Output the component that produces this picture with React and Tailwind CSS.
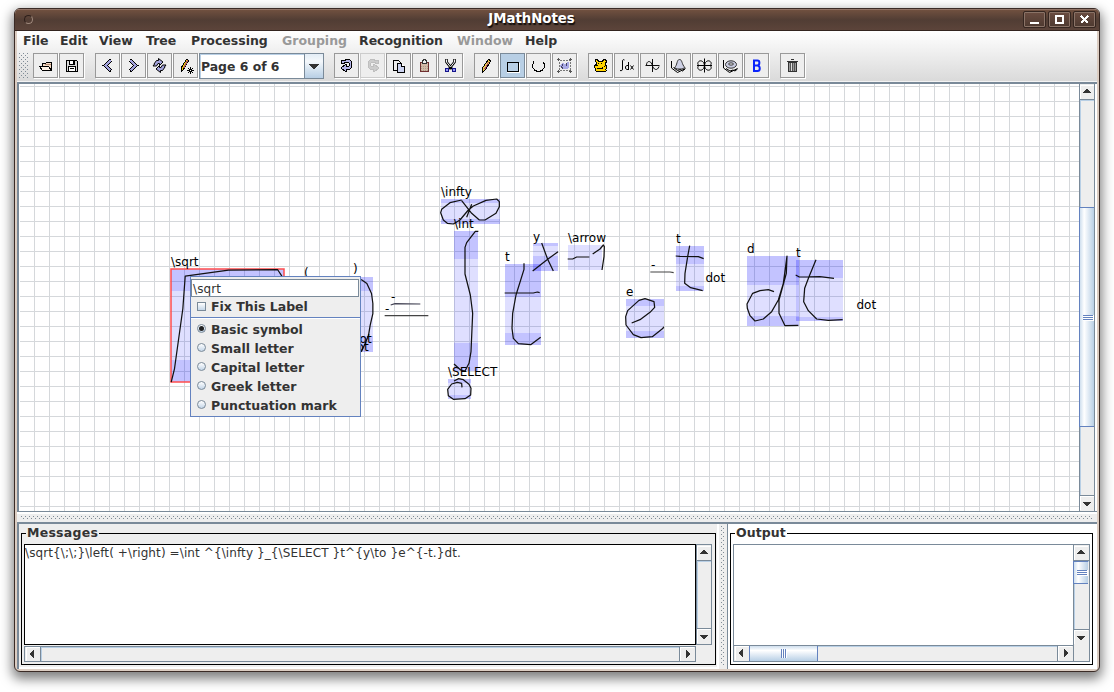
import React from 'react';

const MENUS = [
  ['File', 'w-[37px]'],
  ['Edit', 'w-[39px]'],
  ['View', 'w-[47px]'],
  ['Tree', 'w-[45px]'],
  ['Processing', 'w-[91px]'],
  ['Grouping', 'w-[77px] text-[#999999]'],
  ['Recognition', 'w-[98px]'],
  ['Window', 'w-[68px] text-[#999999]'],
  ['Help', 'w-[60px]'],
];

const CURL = 'M7.500 7.500h3l2-1h3l2 2v6l-2 2h-3v2h-1l-4.500-3.500 4.500-3.500h1v2h2l1-1v-2l-1-1h-3l-2 1h-2z';

/* Toolbar drawings, on a 25 x 25 grid of device pixels */
const ICONS = {
  open: (
    <>
      <path d="M9.500 10.500h3l1-1h5v8h-9z" fill="#f6dcc6" />
      <path d="M6.500 13.500h9l3 4h-9z" fill="#fff3e6" />
      <path d="M12 11.500h6" stroke="#b58d73" />
    </>
  ),
  save: (
    <>
      <path d="M7.500 7.500h10l1 1v10h-11z" fill="#d9d9d9" />
      <path d="M10.500 7.500h5v4h-5z" fill="#fff" />
      <path d="M9.500 13.500h7v5h-7z" fill="#fff" />
      <path d="M14 8v3M11 15.500h4" />
    </>
  ),
  back: (
    <>
      <path d="M16 7l-6 5.500 6 5.500" stroke="#000" strokeWidth="3.400" />
      <path d="M15.500 7.500l-5 5 5 5" stroke="#a3a3dc" strokeWidth="2" />
    </>
  ),
  forward: (
    <>
      <path d="M9 7l6 5.500-6 5.500" stroke="#000" strokeWidth="3.400" />
      <path d="M9.500 7.500l5 5-5 5" stroke="#a3a3dc" strokeWidth="2" />
    </>
  ),
  refresh: (
    <g shapeRendering="auto">
      <path d="M7 11l2.500-3.500h2v-2l4.500 3.500-3.500 3.500v-2h-1.500l-1.500 2.500h-3.500l1.500-2z" fill="#a3a3dc" />
      <path d="M18 14l-2.500 3.500h-2v2l-4.500-3.500 3.500-3.500v2h1.500l1.500-2.500h3.500l-1.500 2z" fill="#a3a3dc" />
    </g>
  ),
  wand: (
    <>
      <path d="M13.500 6.500l2 1-5 9-2.500 2.500v-4z" fill="#f0d000" />
      <path d="M14.500 7.500l-4 8" stroke="#b05a5a" />
      <path d="M17.500 14v7M14 17.500h7M15 15l5 5M20 15l-5 5" />
      <path d="M17 17h1v1h-1z" fill="#fff" stroke="none" />
    </>
  ),
  undo: <path d={CURL} fill="#b4b4e6" />,
  redo: (
    <g transform="translate(26 0) scale(-1 1)">
      <path d={CURL} fill="#cccccc" stroke="#bebebe" />
    </g>
  ),
  copy: (
    <>
      <path d="M7.500 7.500h5l2 2v8h-7z" fill="#eee" />
      <path d="M11.500 10.500h4l3 3v6h-7z" fill="#ccd3f0" />
      <path d="M15.500 10.500v3h3" fill="#fff" />
    </>
  ),
  paste: (
    <>
      <path d="M8.500 9.500h8v9h-8z" fill="#d3b9a6" stroke="#6f2f2f" />
      <path d="M10.500 10.500v-2l1-2h2l1 2v2z" fill="#eee" stroke="#333" />
      <path d="M9 13.500h7M9 15.500h7M9 17.500h7" stroke="#a99c8a" strokeDasharray="1 1" />
    </>
  ),
  cut: (
    <>
      <g shapeRendering="auto">
        <path d="M8.500 6v3l5.500 7M16.500 6v3l-5.500 7" strokeWidth="2.600" />
        <path d="M8.500 6.500v2.500l4 5 4-5v-2.500" stroke="#f4f4f4" />
      </g>
      <path d="M7.500 15.500h3v3h-3zM14.500 15.500h3v3h-3z" fill="#9a9af0" stroke="#14148c" strokeWidth="1.500" />
    </>
  ),
  pencil: (
    <>
      <path d="M14.500 6.500l2 1-1 3-5 7-2.500 2v-4z" fill="#e9c94a" />
      <path d="M14.500 9.500l-4 7" stroke="#b0486a" />
    </>
  ),
  rect: (
    <>
      <path d="M7 19.500h12.500v-10" stroke="#fff" />
      <path d="M7.500 9.500h11v9h-11z" fill="#b8cfe5" />
    </>
  ),
  lasso: <path d="M7.500 8v2l-1 2v2l2 3 2 1h4l2-1 2-3v-2l-1-3" />,
  group: (
    <>
      <path d="M7.500 7.500h11v10h-11z" stroke="#777" strokeDasharray="2 1" />
      <path d="M8 12l3-2 2 2 2-3h2v5l-2 2h-5l-2-2z" fill="#a9a9e6" stroke="none" />
      <path d="M10.500 11.500l-1 3 2 1M14.500 9.500v3" stroke="#446" />
      <path d="M5 6.500h3M6.500 5v3M17 6.500h3M18.500 5v3M5 18.500h3M6.500 17v3M17 18.500h3M18.500 17v3" stroke="#555" />
    </>
  ),
  animal: (
    <>
      <path
        d="M7.500 6.500h2l1 2h4l1-2h2l1 2-1 2v2h1v3l-1 1 1 1-1 1h-9l-1-1v-2l-1-1v-2l2-1v-2l-1-1z"
        fill="#ffd400"
      />
      <path d="M10 10.500h1M13 10.500h1M8 12.500h2M9 15.500h5l1-1M16 13l1 1" />
    </>
  ),
  integral: (
    <path
      shapeRendering="auto"
      d="M10.500 7c-1-.8-2-.3-2 1v8c0 1.500-1 2-2.500 1.500M14.500 9v8M14.500 12.500h-1.500l-1.500 1v2l1.500 1h1.500M16.500 12.500l3 4M19.500 12.500l-3 4"
    />
  ),
  sine: (
    <path
      shapeRendering="auto"
      d="M5.500 12.500h14M12.500 6v13M6.500 12c0-4 4-5 5.500-.5 1.500 6 5.500 6.500 7 2"
      strokeWidth="0.950"
    />
  ),
  surface: (
    <g shapeRendering="auto">
      <path d="M5.500 8v7l6 4.500 8-4" />
      <path d="M8.500 14.500c3-2 2-8 5-8s2 5 5.500 8l-3 1.500h-5z" fill="#cfd2e6" stroke="#333" />
      <path d="M7.500 14.500l4 3 3-1 2 1.500 2.500-2" />
    </g>
  ),
  polar: (
    <path
      shapeRendering="auto"
      d="M5 12.500h15M12.500 5.500v14M12.500 12.500c-.5-5-5-6-6.500-3-.5 1.500 0 2 1 3-1 1-1.500 1.500-1 3 1.500 3 6 2 6.500-3M12.500 12.500c.5-5 5-6 6.500-3 .5 1.500 0 2-1 3 1 1 1.500 1.500 1 3-1.500 3-6 2-6.500-3"
    />
  ),
  torus: (
    <g shapeRendering="auto">
      <path d="M5.500 7v8l6 4.500 8-4" />
      <path d="M8 15.500l4 2.500 3-1 2 1 2.500-2" />
      <ellipse cx="13" cy="11.500" rx="5.500" ry="3.700" fill="#c9cce0" stroke="#333" />
      <ellipse cx="13" cy="11" rx="2.500" ry="1.100" fill="#fff" stroke="#333" />
    </g>
  ),
  bold: (
    <path
      shapeRendering="auto"
      d="M10 18v-10.500h3.500c2.500 0 2.500 4.500 0 5h-3.500M13.500 12.500c3 .5 3 5.500 0 5.500h-4.500"
      stroke="#0b24fb"
      strokeWidth="2"
    />
  ),
  trash: (
    <>
      <path d="M8.500 9.500h8v9h-8z" fill="#9a9a9a" stroke="#333" />
      <path d="M7 8.500h11M11 6.500h3" stroke="#333" />
      <path d="M10.500 10v8M12.500 10v8M14.500 10v8" stroke="#555" />
      <path d="M11.500 10v8" stroke="#ddd" />
    </>
  ),
};

const GROUPS = [
  ['undo', 'redo', 'copy', 'paste', 'cut'],
  ['pencil', 'rect', 'lasso', 'group'],
  ['animal', 'integral', 'sine', 'surface', 'polar', 'torus', 'bold'],
  ['trash'],
];

function ToolButton({ name }) {
  const look =
    name === 'rect'
      ? 'border-[#7a8a99] bg-[#b8cfe5]'
      : name === 'redo'
        ? 'border-[#cccccc] bg-[#eeeeee]'
        : 'border-[#999999] bg-[#eeeeee]';
  return (
    <button className={'h-[25px] w-[25px] shrink-0 border shadow-[1px_1px_0_#ffffff] ' + look}>
      <svg
        className="-m-px block h-[25px] w-[25px]"
        viewBox="0 0 25 25"
        fill="none"
        stroke="#000"
        shapeRendering="crispEdges"
      >
        {ICONS[name]}
      </svg>
    </button>
  );
}

function ToolGroup({ names }) {
  return (
    <div className="flex gap-px">
      {names.map((n) => (
        <ToolButton key={n} name={n} />
      ))}
    </div>
  );
}

const ARROWS = {
  up: 'M6 4h2v1h1v1h1v1h1v1h-8v-1h1v-1h1v-1h1z',
  down: 'M3 6h8v1h-1v1h-1v1h-1v1h-2v-1h-1v-1h-1v-1h-1z',
  left: 'M8 3v8h-1v-1h-1v-1h-1v-1h-1v-2h1v-1h1v-1h1v-1z',
  right: 'M6 3v8h1v-1h1v-1h1v-1h1v-2h-1v-1h-1v-1h-1v-1z',
};

function Arrow({ dir }) {
  return (
    <svg className="h-[14px] w-[14px] shrink-0 bg-[#eeeeee]" viewBox="0 0 14 14" shapeRendering="crispEdges">
      <path d="M0 14V.5H14" fill="none" stroke="#fff" />
      <path d={ARROWS[dir]} fill="#333" />
    </svg>
  );
}

function VBar({ className, children }) {
  return (
    <div className={'flex w-[16px] shrink-0 flex-col border-x border-[#7a8a99] bg-[#eeeeee] ' + className}>
      <div className="h-[16px] shrink-0 border-b border-[#7a8a99] pt-px">
        <Arrow dir="up" />
      </div>
      <div className="flex-1 shadow-[inset_1px_1px_0_#b8cfe5]">{children}</div>
      <div className="h-[16px] shrink-0 border-t border-[#7a8a99]">
        <Arrow dir="down" />
      </div>
    </div>
  );
}

function HBar({ className, children }) {
  return (
    <div className={'flex h-[16px] shrink-0 border-y border-[#7a8a99] bg-[#eeeeee] ' + className}>
      <div className="w-[16px] shrink-0 border-r border-[#7a8a99] pl-px">
        <Arrow dir="left" />
      </div>
      <div className="flex-1 shadow-[inset_1px_1px_0_#b8cfe5]">{children}</div>
      <div className="w-[16px] shrink-0 border-l border-[#7a8a99]">
        <Arrow dir="right" />
      </div>
    </div>
  );
}

function VGrip() {
  return (
    <div className="mt-px h-[6px] w-[10px] bg-[repeating-linear-gradient(to_bottom,#6382bf_0,#6382bf_1px,#ffffff_1px,#ffffff_2px)] shadow-[1px_0_0_#ffffff]" />
  );
}

/* Shaded areas: x, y, width, height, then the height of the upper and lower bands */
const BOXES = [
  [171, 269, 113, 113, 22, 22],
  [300, 277, 73, 75, 14, 16],
  [441, 199, 59, 25, 4, 5],
  [454, 231, 24, 140, 28, 28],
  [533, 243, 25, 28, 3, 15],
  [568, 245, 34, 25, 0, 0],
  [505, 264, 36, 81, 33, 12],
  [448, 379, 23, 20, 4, 4],
  [676, 246, 28, 45, 18, 5],
  [626, 299, 38, 39, 7, 7],
  [747, 256, 52, 70, 29, 10],
  [796, 260, 47, 61, 18, 4],
];

const LABELS = [
  ['\\sqrt', 171, 266],
  ['(', 304, 277],
  [')', 353, 273],
  ['dot', 352, 343],
  ['dot', 349, 351],
  ['\\infty', 441, 196],
  ['\\int', 454, 228],
  ['-', 391, 301],
  ['-', 385, 313],
  ['y', 533, 241],
  ['\\arrow', 568, 242],
  ['t', 505, 261],
  ['\\SELECT', 448, 376],
  ['-', 651, 269],
  ['t', 676, 243],
  ['dot', 705.5, 282],
  ['e', 626, 296],
  ['d', 747, 253],
  ['t', 796, 257],
  ['dot', 856.5, 309],
];

function Notes() {
  return (
    <svg className="block h-[427px] w-[1060px]" viewBox="19 84 1060 427">
      <defs>
        <pattern id="grid" x="34" y="86" width="15" height="15" patternUnits="userSpaceOnUse">
          <path d="M0 0h15v1h-14v14h-1z" fill="#d5d8db" />
        </pattern>
      </defs>
      <rect x="19" y="84" width="1060" height="427" fill="#fff" />
      <rect x="20" y="84" width="1059" height="427" fill="url(#grid)" />
      {BOXES.map(([x, y, w, h, a, b], i) => (
        <g key={i} fill="#0000ff" fillOpacity="0.125">
          <rect x={x} y={y} width={w} height={h} />
          <rect x={x} y={y} width={w} height={a} />
          <rect x={x} y={y + h - b} width={w} height={b} />
        </g>
      ))}
      <rect x="171" y="269" width="113" height="113" fill="none" stroke="#ff4d4d" strokeWidth="1.500" />
      <g fill="none" stroke="#111" strokeWidth="3.700" strokeLinejoin="round">
        <g transform="translate(150.2 240.2) scale(.33333)">
          <path d="M63 426L73 385 98 205 105 108 235 90 382 88 395 108" />
          <path d="M633 118L650 130 664 160 668 190 668 220 660 255 655 285 645 310 633 335" />
        </g>
        <g transform="translate(370 170) scale(.33333)">
          <path d="M275 90L240 98 215 118 212 128 220 150 232 160 250 162 270 150 295 120 310 108 348 91 380 87 388 95 388 110 378 130 345 150 328 150 305 130 275 92M305 103L290 142" />
          <path d="M325 184L316 184 290 218 285 232 285 312 301 375 308 430 303 545 297 580 285 603 272 600 252 582" />
          <path d="M462 280L462 298 438 375 428 430 426 475 430 505 445 521 482 524 512 502M404 369L490 369 502 366 509 368" />
          <path d="M515 219L533 268 550 303M564 245L533 268 488 303" />
          <path d="M593 267L608 267 620 261 658 261M668 252L690 237 700 225 703 230 702 260 696 300" />
          <path d="M252 633L266 626 280 629 297 643 303 655 302 675 285 686 250 688 235 677 233 658 245 642 262 637 275 640 276 652" />
          <path d="M62 405L75 401 151 402" stroke="#445" />
          <path d="M44 437L175 437" stroke="#444" />
        </g>
        <g transform="translate(590 220) scale(.33333)">
          <path d="M181 156L240 156 251 158" stroke="#444" />
          <path d="M299 77L293 110 285 160 284 190 302 203 338 212M257 108L270 109 325 110 341 116" />
          <path d="M125 309L150 299 180 277 194 262 192 245 165 236 147 241 113 272 107 290 108 315 130 344 153 353 187 350 219 325 221 320" />
          <path d="M552 215L535 209 510 212 488 220 471 252 472 265 480 287 495 303 520 297 545 275 565 240 580 190 591 108 589 160 567 240 567 280 585 317 625 316" />
          <path d="M678 119L657 170 644 205 641 245 655 272 680 297 715 301 758 299M617 165L628 171 690 170 732 175" />
        </g>
      </g>
      <g className="font-['DejaVu_Sans',sans-serif] text-[12px]" fill="#000">
        {LABELS.map(([t, x, y], i) => (
          <text key={i} x={x} y={y}>
            {t}
          </text>
        ))}
      </g>
    </svg>
  );
}

function Radio({ label, on }) {
  return (
    <div className="flex h-[19px] items-center pl-[6px]">
      <span className="mt-[-3px] flex h-[9px] w-[9px] items-center justify-center rounded-full border border-[#7a8a99] bg-linear-to-b from-white to-[#c4d6e8]">
        {on && <span className="h-[5px] w-[5px] rounded-full bg-[#222222]" />}
      </span>
      <span className="ml-[5px] leading-[19px]">{label}</span>
    </div>
  );
}

function LabelPopup() {
  return (
    <div className="absolute left-[171px] top-[192px] flex h-[141px] w-[171px] flex-col border border-[#6382bf] bg-[#eeeeee] text-[12.500px] font-bold">
      <div className="mt-[2px] h-[18px] w-[168px] shrink-0 border border-[#7a8a99] bg-white pl-px text-[12px] font-normal leading-[18px] tracking-[0.1px]">
        \sqrt
      </div>
      <div className="flex h-[20px] shrink-0 items-center pl-[6px]">
        <span className="mt-[-2px] h-[9px] w-[9px] border border-[#7a8a99] bg-linear-to-b from-white to-[#c4d6e8]" />
        <span className="ml-[5px] leading-[18px]">Fix This Label</span>
      </div>
      <div className="mb-[2px] h-px shrink-0 bg-[#6382bf] shadow-[0_1px_0_#ffffff]" />
      <Radio label="Basic symbol" on />
      <Radio label="Small letter" />
      <Radio label="Capital letter" />
      <Radio label="Greek letter" />
      <Radio label="Punctuation mark" />
    </div>
  );
}

function WinButton({ children }) {
  return (
    <button className="flex h-[17px] w-[23px] items-center justify-center rounded-[2px] border border-[#352620] bg-linear-to-b from-[#6b4d41] to-[#4d3930] shadow-[inset_0_0_0_1px_#8a7367]">
      <svg className="h-[11px] w-[11px]" viewBox="0 0 11 11" fill="none" shapeRendering="crispEdges">
        {children}
      </svg>
    </button>
  );
}

const DOTS =
  'bg-[radial-gradient(circle_at_0.5px_0.5px,#7f8b96_0.7px,transparent_0.8px),radial-gradient(circle_at_2.5px_2.5px,#7f8b96_0.7px,transparent_0.8px)] bg-[length:4px_4px]';

function Legend({ children, className }) {
  return (
    <legend className={'ml-[2px] px-px text-[12.500px] font-bold leading-[16px] ' + className}>{children}</legend>
  );
}

export default function App() {
  return (
    <div className="h-[692px] w-[1114px] overflow-hidden bg-white px-[14px] pt-[8px] font-['DejaVu_Sans',sans-serif] text-[12px] text-[#333333]">
      <div className="flex h-[664px] w-[1086px] flex-col overflow-hidden rounded-[6px] border border-[#3a2b26] bg-[#dccdc2] shadow-[0_5px_12px_2px_rgba(0,0,0,0.5)]">
        <div className="flex h-[22px] shrink-0 items-center border-b border-t border-b-[#33241f] border-t-[#927467] bg-linear-to-b from-[#70503f] via-[#513d34] to-[#5c443a] pb-[2px] pr-[3px]">
          <div className="ml-[9px] h-[9px] w-[9px] rounded-full border border-[#2d1f1a] border-b-[#a08a7e] border-r-[#a08a7e]" />
          <div className="flex-1 pl-[7px] text-center text-[13.300px] font-bold leading-[18px] text-white [text-shadow:1px_2px_1px_rgba(0,0,0,0.8)]">
            JMathNotes
          </div>
          <div className="flex gap-[2px]">
            <WinButton>
              <path d="M1 8h9v2H1z" fill="#fff" />
            </WinButton>
            <WinButton>
              <path d="M2 2h7v7H2z" stroke="#fff" strokeWidth="2" />
            </WinButton>
            <WinButton>
              <path d="M2 2l7 7M9 2l-7 7" stroke="#fff" strokeWidth="2.500" />
            </WinButton>
          </div>
        </div>

        <div className="mx-[2px] mb-[2px] flex min-h-0 flex-1 flex-col bg-[#eeeeee]">
          <div className="flex h-[50px] shrink-0 flex-col bg-linear-to-b from-white to-[#dadada]">
            <div className="flex h-[22px] pl-[6px] text-[12.500px] font-bold leading-[20px]">
              {MENUS.map(([t, c]) => (
                <span key={t} className={'shrink-0 ' + c}>
                  {t}
                </span>
              ))}
            </div>
            <div className="flex h-[26px] items-start pl-[2px]">
              <div className={'h-[26px] w-[10px] ' + DOTS} />
              <div className="ml-[4px] flex">
                <ToolGroup names={['open', 'save']} />
                <div className="w-[11px]" />
                <ToolGroup names={['back', 'forward', 'refresh', 'wand']} />
              </div>
              <div className="ml-px flex h-[26px] w-[125px] border border-[#7a8a99] bg-white font-bold shadow-[inset_1px_1px_0_#b8cfe5]">
                <span className="flex-1 pl-px text-[12.400px] leading-[26px]">Page 6 of 6</span>
                <span className="flex w-[19px] items-center justify-center border-l border-[#7a8a99] bg-linear-to-b from-[#e3edf6] via-[#f4f8fb] via-30% to-[#b8cfe5]">
                  <svg className="h-[5px] w-[10px]" viewBox="0 0 10 5" shapeRendering="crispEdges">
                    <path d="M0 0h10v1h-1v1h-1v1h-1v1h-1v1h-2v-1h-1v-1h-1v-1h-1v-1h-1z" fill="#333" />
                  </svg>
                </span>
              </div>
              <div className="ml-[10px] flex gap-[11px]">
                {GROUPS.map((g) => (
                  <ToolGroup key={g[0]} names={g} />
                ))}
              </div>
            </div>
          </div>
          <div className="h-px shrink-0 bg-[#f4f4f4]" />

          <div className="relative flex h-[430px] shrink-0 border-b border-l-2 border-t-2 border-[#7a8a99] bg-white">
            <Notes />
            <VBar className="h-[427px]">
              <div className="h-[107px]" />
              <div className="-ml-px flex h-[220px] w-[15px] items-center border border-r-0 border-[#6382bf] bg-linear-to-r from-[#cfdfee] via-white via-30% to-[#b8cfe5] pl-[3px]">
                <VGrip />
              </div>
            </VBar>
            <LabelPopup />
          </div>

          <div className="h-[10px] shrink-0 border-t-2 border-white pl-[4px] pr-[4px] pt-[2px]">
            <div className={'h-[4px] ' + DOTS} />
          </div>

          <div className="flex h-[147px] shrink-0 border-t-2 border-[#7a8a99]">
            <div className="flex w-[702px] flex-col border-l-2 border-[#7a8a99] bg-[#eeeeee] pl-[2px] shadow-[inset_-2px_-2px_0_#ffffff]">
              <fieldset className="mt-px h-[140px] w-[695px] border border-black pl-[2px]">
                <Legend className="tracking-[0.25px]">Messages</Legend>
                <div className="mt-[3px] flex">
                  <div className="h-[101px] w-[672px] border border-black bg-white leading-[17px] tracking-[0.105px]">
                    {'\\sqrt{\\;\\;}\\left( +\\right) =\\int ^{\\infty }_{\\SELECT }t^{y\\to }e^{-t.}dt.'}
                  </div>
                  <VBar className="h-[101px] border-y" />
                </div>
                <HBar className="mt-px w-[672px] border-x" />
              </fieldset>
            </div>
            <div className="flex w-[8px] shrink-0 justify-center pt-[2px]">
              <div className={'h-[139px] w-[4px] ' + DOTS} />
            </div>
            <div className="flex-1 border-l border-[#7a8a99] bg-white pl-[2px]">
              <fieldset className="mt-px h-[140px] w-[363px] border border-black pl-[2px]">
                <Legend className="tracking-[0.1px]">Output</Legend>
                <div className="mt-[3px] h-[118px] w-[357px] border border-[#7a8a99] bg-[#eeeeee]">
                  <div className="flex">
                    <div className="h-[100px] w-[339px] bg-white" />
                    <VBar className="h-[100px] border-r-0">
                      <div className="-ml-px flex h-[23px] w-[15px] items-center border border-r-0 border-[#6382bf] bg-linear-to-r from-[#cfdfee] via-white via-30% to-[#b8cfe5] pl-[3px]">
                        <VGrip />
                      </div>
                    </VBar>
                  </div>
                  <HBar className="w-[340px] border-b-0 border-r">
                    <div className="-ml-px flex h-[15px] w-[69px] items-center justify-center border-x border-[#6382bf] bg-linear-to-b from-[#cfdfee] via-white via-30% to-[#b8cfe5]">
                      <div className="h-[9px] w-[6px] bg-[repeating-linear-gradient(to_right,#6382bf_0,#6382bf_1px,#ffffff_1px,#ffffff_2px)]" />
                    </div>
                  </HBar>
                </div>
              </fieldset>
            </div>
          </div>
        </div>
      </div>
    </div>
  );
}
